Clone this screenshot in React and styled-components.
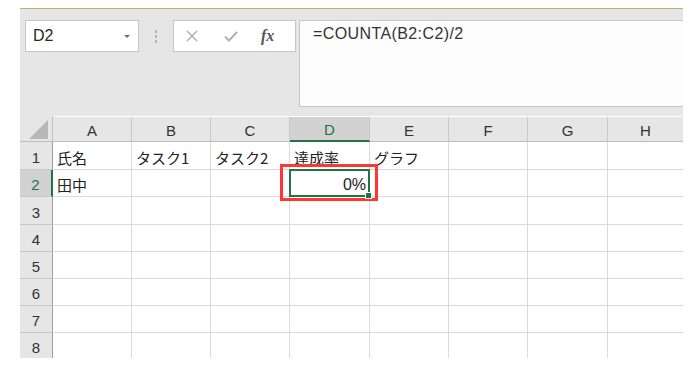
import { Fragment } from 'react';
import styled, { createGlobalStyle, css } from 'styled-components';

const GlobalStyle = createGlobalStyle`
  html, body {
    margin: 0;
    padding: 0;
    background: #ffffff;
  }
  body {
    font-family: 'Liberation Sans', 'Noto Sans CJK JP', sans-serif;
  }
`;

const GREEN = '#217346';

const Frame = styled.div`
  margin-left: 20px;
  padding-top: 8px;
  width: 663px;
  height: 358px;
  overflow: hidden;
  box-sizing: border-box;
`;

const Toolbar = styled.div`
  border-top: 1px solid #c9ab62;
  background: #e6e6e6;
  height: 108px;
  box-sizing: border-box;
  padding: 11px 0 0 5px;
  display: flex;
  align-items: flex-start;
`;

const NameBox = styled.div`
  width: 114px;
  height: 32px;
  box-sizing: border-box;
  background: #ffffff;
  border: 1px solid #c6c6c6;
  display: flex;
  align-items: center;
  justify-content: space-between;
  padding: 0 8px 0 7px;
  font-size: 16px;
  color: #262626;
`;

const DropArrow = styled.span`
  width: 0;
  height: 0;
  border-left: 3px solid transparent;
  border-right: 3px solid transparent;
  border-top: 3px solid #707070;
`;

const Grip = styled.div`
  width: 34px;
  height: 32px;
  display: flex;
  flex-direction: column;
  align-items: center;
  justify-content: center;
  gap: 2px;
`;

const GripDot = styled.span`
  width: 2px;
  height: 3px;
  background: #b4b4b4;
`;

const FxButtons = styled.div`
  width: 123px;
  height: 32px;
  box-sizing: border-box;
  background: #ffffff;
  border: 1px solid #c6c6c6;
  display: flex;
  align-items: center;
  padding-left: 11px;
  gap: 24px;
`;

const FxLabel = styled.span`
  font-family: 'Liberation Serif', serif;
  font-style: italic;
  font-weight: bold;
  font-size: 16px;
  color: #555555;
  margin-left: -2px;
`;

const FormulaInput = styled.div`
  flex: 1;
  margin-left: 3px;
  height: 87px;
  box-sizing: border-box;
  background: #fdfdfd;
  border: 1px solid #c6c6c6;
  border-right: none;
  padding: 4px 0 0 13px;
  font-size: 16px;
  color: #333333;
  letter-spacing: 0.4px;
`;

const Sheet = styled.div`
  display: grid;
  grid-template-columns: 33px 79px 79px 79px 80px 79px 79px 80px 1fr;
  grid-template-rows: 26px 28px 27px 28px 27px 27px 27px 27px 27px;
`;

const Corner = styled.div`
  background: #e6e6e6;
  border-right: 1px solid #c0c0c0;
  border-bottom: 1px solid #bdbdbd;
  display: flex;
  align-items: flex-end;
  justify-content: flex-end;
  padding: 0 4px 2px 0;
`;

const ColHeader = styled.div`
  background: ${({ $active }) => ($active ? '#d2d2d2' : '#e6e6e6')};
  color: ${({ $active }) => ($active ? GREEN : '#333333')};
  border-right: 1px solid #c8c8c8;
  border-bottom: ${({ $active }) => ($active ? `2px solid ${GREEN}` : '1px solid #bdbdbd')};
  display: flex;
  align-items: center;
  justify-content: center;
  padding-top: 2px;
  font-size: 15px;
  margin-top: 1px;
  ${({ $last }) =>
    $last &&
    css`
      border-right: none;
    `}
`;

const RowHeader = styled.div`
  background: ${({ $active }) => ($active ? '#d2d2d2' : '#e6e6e6')};
  color: ${({ $active }) => ($active ? GREEN : '#333333')};
  border-bottom: 1px solid #c8c8c8;
  border-right: ${({ $active }) => ($active ? `2px solid ${GREEN}` : '1px solid #9e9e9e')};
  display: flex;
  align-items: center;
  justify-content: center;
  padding-top: 3px;
  font-size: 15px;
`;

const Cell = styled.div`
  border-right: ${({ $last }) => ($last ? 'none' : '1px solid #dadada')};
  border-bottom: 1px solid #dadada;
  display: flex;
  align-items: center;
  justify-content: ${({ $right }) => ($right ? 'flex-end' : 'flex-start')};
  padding: 3px 4px 0;
  font-family: 'Noto Sans CJK JP', sans-serif;
  font-size: 15px;
  color: #222222;
  white-space: nowrap;
  overflow: hidden;
`;

const SelectedCell = styled(Cell)`
  position: relative;
  border: 2px solid ${GREEN};
  margin: -1px 0 0 -1px;
  overflow: visible;
  font-family: 'Liberation Sans', sans-serif;
  font-size: 16px;
  padding-right: 2px;

  &::after {
    content: '';
    position: absolute;
    right: -4px;
    bottom: -4px;
    width: 5px;
    height: 5px;
    background: ${GREEN};
    border: 1px solid #ffffff;
  }
`;

const Callout = styled.span`
  position: absolute;
  left: -11px;
  top: -7px;
  right: -10px;
  bottom: -6px;
  border: 3px solid #ff3636;
  pointer-events: none;
`;

const columns = ['A', 'B', 'C', 'D', 'E', 'F', 'G', 'H'];
const rows = [1, 2, 3, 4, 5, 6, 7, 8];

const data = {
  1: { A: '氏名', B: 'タスク1', C: 'タスク2', D: '達成率', E: 'グラフ' },
  2: { A: '田中', D: '0%' },
};

const CrossIcon = () => (
  <svg width="14" height="14" viewBox="0 0 14 14">
    <path d="M2 2 L12 12 M12 2 L2 12" stroke="#aaaaaa" strokeWidth="1.4" fill="none" />
  </svg>
);

const CheckIcon = () => (
  <svg width="16" height="14" viewBox="0 0 16 14">
    <path d="M2 7.5 L6 11.5 L14 3" stroke="#b0b0b0" strokeWidth="2" fill="none" />
  </svg>
);

const CornerTriangle = () => (
  <svg width="19" height="19" viewBox="0 0 19 19">
    <polygon points="19,0 19,19 0,19" fill="#b8b8b8" />
  </svg>
);

const App = () => (
  <>
    <GlobalStyle />
    <Frame>
      <Toolbar>
        <NameBox>
          D2
          <DropArrow />
        </NameBox>
        <Grip>
          <GripDot />
          <GripDot />
          <GripDot />
        </Grip>
        <FxButtons>
          <CrossIcon />
          <CheckIcon />
          <FxLabel>fx</FxLabel>
        </FxButtons>
        <FormulaInput>=COUNTA(B2:C2)/2</FormulaInput>
      </Toolbar>
      <Sheet>
        <Corner>
          <CornerTriangle />
        </Corner>
        {columns.map((col, i) => (
          <ColHeader key={col} $active={col === 'D'} $last={i === columns.length - 1}>
            {col}
          </ColHeader>
        ))}
        {rows.map((row) => (
          <Fragment key={row}>
            <RowHeader $active={row === 2}>{row}</RowHeader>
            {columns.map((col, i) => {
              const value = data[row]?.[col];
              if (row === 2 && col === 'D') {
                return (
                  <SelectedCell key={col} $right>
                    {value}
                    <Callout />
                  </SelectedCell>
                );
              }
              return (
                <Cell key={col} $last={i === columns.length - 1}>
                  {value}
                </Cell>
              );
            })}
          </Fragment>
        ))}
      </Sheet>
    </Frame>
  </>
);

export default App;
